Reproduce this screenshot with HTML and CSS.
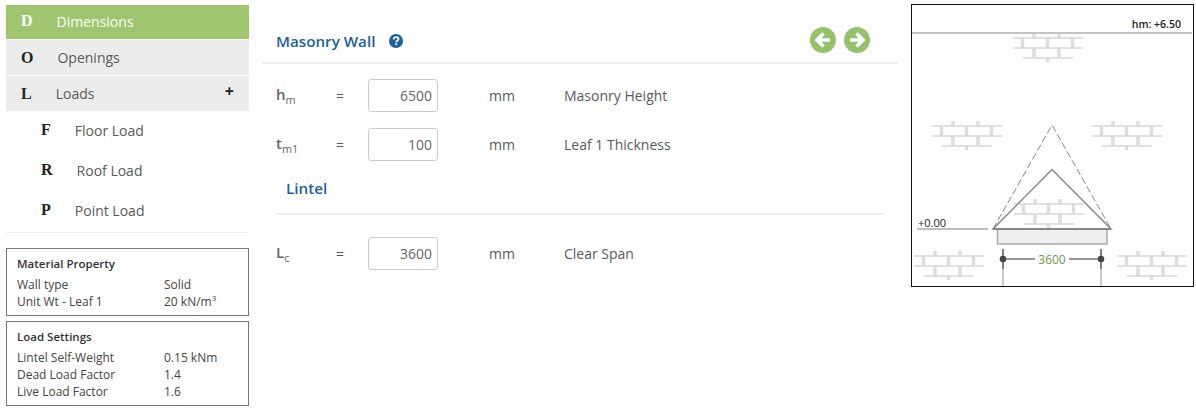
FILE: index.html
```html
<!DOCTYPE html>
<html lang="en">
<head>
    <meta charset="UTF-8">
    <meta name="viewport" content="width=device-width, initial-scale=1.0">
    <title>Masonry Wall</title>
    <link rel="stylesheet" href="styles.css">
</head>
<body>
    <div class="page">
        <aside class="sidebar">
            <nav class="menu">
                <a class="menu-item active"><b>D</b>Dimensions</a>
                <a class="menu-item"><b>O</b>Openings</a>
                <a class="menu-item"><b>L</b>Loads<span class="plus">+</span></a>
                <div class="submenu">
                    <a class="sub-item"><b>F</b>Floor Load</a>
                    <a class="sub-item"><b>R</b>Roof Load</a>
                    <a class="sub-item"><b>P</b>Point Load</a>
                </div>
            </nav>

            <div class="info-box">
                <h4>Material Property</h4>
                <div class="info-row"><span>Wall type</span><span>Solid</span></div>
                <div class="info-row"><span>Unit Wt - Leaf 1</span><span>20 kN/m<sup>3</sup></span></div>
            </div>
            <div class="info-box">
                <h4>Load Settings</h4>
                <div class="info-row"><span>Lintel Self-Weight</span><span>0.15 kNm</span></div>
                <div class="info-row"><span>Dead Load Factor</span><span>1.4</span></div>
                <div class="info-row"><span>Live Load Factor</span><span>1.6</span></div>
            </div>
        </aside>

        <main class="content">
            <div class="title-bar">
                <h2>Masonry Wall</h2>
                <svg class="help-icon" width="14" height="14" viewBox="0 0 14 14">
                    <circle cx="7" cy="7" r="7" fill="#1b5fa3"/>
                    <path d="M4.6 5.4 C4.8 3.8 5.8 3.1 7.1 3.1 C8.5 3.1 9.5 4 9.5 5.1 C9.5 6.7 7.2 6.7 7.2 8.2" fill="none" stroke="#fff" stroke-width="1.9"/>
                    <rect x="6.2" y="9.2" width="2" height="2" fill="#fff"/>
                </svg>
                <div class="arrows">
                    <svg width="26" height="26" viewBox="0 0 26 26">
                        <circle cx="13" cy="13" r="13" fill="#98c26a"/>
                        <path d="M13.5 6.5 L7 13 L13.5 19.5 M7.5 13 H20" fill="none" stroke="#fff" stroke-width="3.6"/>
                    </svg>
                    <svg width="26" height="26" viewBox="0 0 26 26">
                        <circle cx="13" cy="13" r="13" fill="#98c26a"/>
                        <path d="M12.5 6.5 L19 13 L12.5 19.5 M18.5 13 H6" fill="none" stroke="#fff" stroke-width="3.6"/>
                    </svg>
                </div>
            </div>

            <div class="field-row">
                <span class="symbol">h<sub>m</sub></span>
                <span>=</span>
                <input type="text" value="6500">
                <span>mm</span>
                <span>Masonry Height</span>
            </div>
            <div class="field-row">
                <span class="symbol">t<sub>m1</sub></span>
                <span>=</span>
                <input type="text" value="100">
                <span>mm</span>
                <span>Leaf 1 Thickness</span>
            </div>

            <div class="section-head">
                <h3>Lintel</h3>
            </div>

            <div class="field-row">
                <span class="symbol">L<sub>c</sub></span>
                <span>=</span>
                <input type="text" value="3600">
                <span>mm</span>
                <span>Clear Span</span>
            </div>
        </main>

        <div class="diagram">
            <svg width="283" height="283" viewBox="911 4 283 283">
                <defs>
                    <g id="brick">
                        <path class="brick-v" d="M21 0 V5 M46 0 V5 M9.500 5 V15 M34.500 5 V15 M59.500 5 V15 M21 15 V25 M46 15 V25 M34.500 25 V29"/>
                        <path class="brick-h" d="M0 5 H70 M0 15 H70 M10 25 H60"/>
                    </g>
                </defs>

                <use href="#brick" x="1013" y="33"/>
                <use href="#brick" x="932" y="121"/>
                <use href="#brick" x="1092" y="121"/>
                <use href="#brick" x="1014" y="199"/>
                <use href="#brick" x="914" y="251"/>
                <use href="#brick" x="1117" y="251"/>

                <line class="level" x1="912" y1="33" x2="1192" y2="33"/>
                <text class="level-text" x="1181" y="28" text-anchor="end">hm: +6.50</text>

                <line class="ground" x1="917" y1="229" x2="988" y2="229"/>
                <text class="ground-text" x="918" y="227">+0.00</text>

                <path class="load-dash" d="M993 229 L1052 125 L1111 229"/>
                <path class="load-solid" d="M993 229 L1052 169.500 L1111 229 Z"/>
                <rect class="lintel" x="997.500" y="229" width="109.500" height="15"/>
                <line class="lintel-top" x1="993" y1="229" x2="1111" y2="229"/>

                <path class="span-light" d="M1003 269 V287 M1101 269 V287"/>
                <path class="span-dark" d="M1003 249 V269 M1101 249 V269"/>
                <path class="span-line" d="M1003 259 H1035 M1069 259 H1101"/>
                <circle class="span-dot" cx="1003" cy="259" r="3.300"/>
                <circle class="span-dot" cx="1101" cy="259" r="3.300"/>
                <text class="span-text" x="1052" y="263.500" text-anchor="middle">3600</text>
            </svg>
        </div>
    </div>
</body>
</html>
```

FILE: styles.css
```css
* {
    box-sizing: border-box;
}
body {
    margin: 0;
    padding: 0;
    background-color: white;
    font-family: "Open Sans", sans-serif;
    font-size: 14px;
    color: #5a5a5a;
}
.page {
    display: flex;
    align-items: flex-start;
    gap: 13px;
    padding: 5px 0 0 6px;
}

/* left menu */
.sidebar {
    width: 243px;
    flex-shrink: 0;
}
.menu {
    border-bottom: 1px solid #f0f0f0;
    padding-bottom: 1px;
    margin-bottom: 15px;
}
.menu b {
    font-family: "Liberation Serif", serif;
    font-size: 16px;
    margin-right: 24px;
    color: #222;
}
.menu-item {
    display: flex;
    align-items: center;
    height: 35px;
    padding-left: 15px;
    margin-bottom: 1px;
    background-color: #ececec;
}
.menu-item.active {
    height: 34px;
    padding-bottom: 2px;
    background-color: #9fc66f;
    color: white;
}
.menu-item.active b {
    color: white;
}
.plus {
    margin-left: auto;
    margin-right: 15px;
    margin-top: -5px;
    font-size: 16px;
    font-weight: 700;
    color: #222;
}
.submenu {
    margin-top: -2px;
    padding: 0 0 1px 35px;
}
.sub-item {
    display: flex;
    align-items: center;
    height: 40px;
}

/* info boxes */
.info-box {
    border: 1px solid #777;
    padding: 6px 10px 5px;
    margin-bottom: 5px;
    font-size: 12px;
    line-height: 17px;
    color: #444;
}
.info-box h4 {
    margin: 0 0 4px;
    font-size: 11.500px;
    font-weight: 600;
    line-height: 17px;
    color: #333;
}
.info-row {
    display: grid;
    grid-template-columns: 147px 1fr;
}
.info-row sup {
    font-size: 8px;
    line-height: 0;
}

/* main form */
.content {
    width: 636px;
    flex-shrink: 0;
}
.title-bar {
    display: flex;
    align-items: center;
    height: 59px;
    padding: 15px 0 0 14px;
    border-bottom: 2px solid #eee;
}
.title-bar h2 {
    margin: 0;
    font-size: 15.200px;
    font-weight: 600;
    color: #1b5fa3;
}
.help-icon {
    margin-left: 14px;
}
.arrows {
    display: flex;
    gap: 8px;
    margin-left: auto;
    margin-right: 28px;
    margin-bottom: 2px;
}
.field-row {
    display: grid;
    grid-template-columns: 60px 32px 121px 75px 1fr;
    align-items: center;
    height: 33px;
    margin-top: 15px;
    padding-left: 14px;
}
.field-row + .field-row {
    margin-top: 16px;
}
.field-row input {
    width: 70px;
    height: 33px;
    padding: 0 5px;
    border: 1px solid #ccc;
    border-radius: 3px;
    text-align: right;
    font-family: inherit;
    font-size: 14px;
    color: #666;
}
.symbol {
    padding-bottom: 3px;
    font-size: 15px;
    font-weight: 600;
    color: #666;
}
.symbol sub {
    font-size: 11px;
    font-weight: 400;
    line-height: 0;
}
.section-head {
    width: 608px;
    height: 54px;
    margin: 0 0 22px 14px;
    padding: 17px 0 0 10px;
    border-bottom: 2px solid #eee;
}
.section-head h3 {
    margin: 0;
    font-size: 15.200px;
    font-weight: 600;
    line-height: 20px;
    color: #1b5fa3;
}

/* wall picture */
.diagram {
    width: 283px;
    height: 283px;
    flex-shrink: 0;
    margin-top: -1px;
    border: 1.500px solid #111;
    overflow: hidden;
}
.diagram svg {
    display: block;
    margin: -1.500px;
}
.brick-v {
    fill: none;
    stroke: #ddd;
    stroke-width: 3.500;
}
.brick-h {
    fill: none;
    stroke: #d8d8d8;
    stroke-width: 1.300;
}
.level {
    stroke: #c4c4c4;
    stroke-width: 2;
}
.level-text {
    font-size: 10.500px;
    font-weight: 600;
    fill: #222;
}
.ground {
    stroke: #aaa;
    stroke-width: 1.500;
}
.ground-text {
    font-size: 11px;
    fill: #222;
}
.load-dash {
    fill: none;
    stroke: #888;
    stroke-dasharray: 7 3;
}
.load-solid {
    fill: none;
    stroke: #888;
    stroke-width: 1.500;
}
.lintel {
    fill: #eee;
    stroke: #aaa;
    stroke-width: 1.500;
}
.lintel-top {
    stroke: #888;
    stroke-width: 2;
}
.span-light {
    fill: none;
    stroke: #bbb;
    stroke-width: 1.500;
}
.span-dark {
    fill: none;
    stroke: #555;
    stroke-width: 1.500;
}
.span-line {
    fill: none;
    stroke: #777;
    stroke-width: 1.500;
}
.span-dot {
    fill: #444;
}
.span-text {
    font-size: 12px;
    fill: #6f9a4a;
}
```
